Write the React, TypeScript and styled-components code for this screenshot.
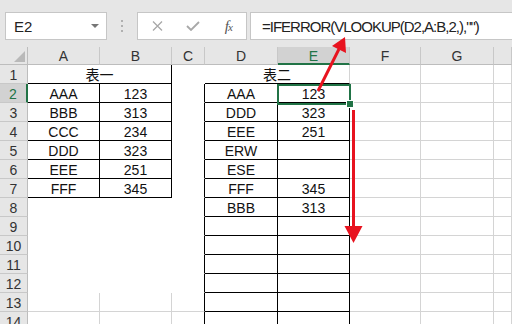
import React from 'react';
import styled, { createGlobalStyle } from 'styled-components';

const GlobalStyle = createGlobalStyle`
  body {
    margin: 0;
    background: #fff;
    font-family: 'Liberation Sans', 'Noto Sans CJK SC', sans-serif;
  }
`;

const K = '#000';
const GR = '#d4d4d4';
const NO = 'transparent';
const GREEN = '#217346';
const RED = '#e8131f';

// H only peeks in at the right edge, its letter is off screen
const COLS = ['A', 'B', 'C', 'D', 'E', 'F', 'G', ''];
const ROWS = Array.from({ length: 14 }, (_, i) => i + 1);

const TABLE_ONE = [
  ['AAA', '123'],
  ['BBB', '313'],
  ['CCC', '234'],
  ['DDD', '323'],
  ['EEE', '251'],
  ['FFF', '345'],
];

const TABLE_TWO = [
  ['AAA', '123'],
  ['DDD', '323'],
  ['EEE', '251'],
  ['ERW', ''],
  ['ESE', ''],
  ['FFF', '345'],
  ['BBB', '313'],
];

type CellSpec = { text?: string; r: string; b: string; span?: number };

const gridCell: CellSpec = { r: GR, b: GR };

const rowCells = (row: number): CellSpec[] => {
  if (row === 1) {
    return [
      { text: '表一', r: K, b: K, span: 2 },
      { r: NO, b: NO },
      { text: '表二', r: GR, b: K, span: 2 },
      gridCell,
      gridCell,
      gridCell,
    ];
  }
  const one = TABLE_ONE[row - 2];
  let left: CellSpec[];
  if (one) {
    left = [
      { text: one[0], r: K, b: K },
      { text: one[1], r: K, b: K },
    ];
  } else if (row >= 13) {
    left = [gridCell, gridCell];
  } else {
    left = [
      { r: NO, b: NO },
      { r: NO, b: NO },
    ];
  }
  const two = TABLE_TWO[row - 2] || ['', ''];
  return [
    ...left,
    { r: K, b: row >= 13 ? GR : NO },
    { text: two[0], r: K, b: K },
    { text: two[1], r: K, b: K },
    gridCell,
    gridCell,
    gridCell,
  ];
};

const Frame = styled.div`
  position: relative;
  width: 512px;
  height: 324px;
  overflow: hidden;
  background: #fff;
`;

const TopBar = styled.div`
  display: flex;
  align-items: flex-start;
  height: 50px;
  box-sizing: border-box;
  padding: 12px 0 0 5px;
  background: #e6e6e6;
  border-top: 3px solid #f2f2f2;
  margin-top: -3px;
`;

const NameBox = styled.div`
  display: flex;
  align-items: center;
  justify-content: space-between;
  width: 102px;
  height: 28px;
  box-sizing: border-box;
  padding: 0 7px 0 8px;
  background: #fff;
  border: 1px solid #c6c6c6;
  font-size: 15px;
  color: #222;
`;

const Caret = styled.span`
  width: 0;
  height: 0;
  border-left: 4px solid transparent;
  border-right: 4px solid transparent;
  border-top: 4px solid #767676;
`;

const Grip = styled.div`
  display: flex;
  flex-direction: column;
  align-items: center;
  justify-content: center;
  gap: 3px;
  width: 30px;
  height: 28px;
`;

const GripDot = styled.span`
  width: 2px;
  height: 2px;
  background: #b0b0b0;
`;

const FxBox = styled.div`
  display: flex;
  align-items: center;
  width: 110px;
  height: 28px;
  box-sizing: border-box;
  padding-left: 2px;
  background: #fff;
  border: 1px solid #c6c6c6;
`;

const IconSlot = styled.div`
  display: flex;
  align-items: center;
  justify-content: center;
  width: 36px;
  height: 100%;
`;

const FxText = styled.span`
  font-family: 'Liberation Serif', serif;
  font-style: italic;
  font-size: 15px;
  color: #555;
  letter-spacing: -1px;

  & > small {
    font-size: 11px;
  }
`;

const FormulaInput = styled.div`
  flex: 1;
  display: flex;
  align-items: center;
  height: 28px;
  box-sizing: border-box;
  margin-left: 3px;
  padding-left: 11px;
  background: #fff;
  border: 1px solid #c6c6c6;
  border-right: none;
  font-size: 15px;
  letter-spacing: -1px;
  color: #222;
  white-space: nowrap;
  overflow: hidden;
`;

const Sheet = styled.div`
  position: relative;
  display: grid;
  grid-template-columns: 28px 72px 72px 33px 73px 72px 71px 73px 1fr;
  grid-template-rows: 18px repeat(14, 19px);
`;

const Corner = styled.div`
  position: relative;
  background: #e6e6e6;
  box-sizing: border-box;
  border-right: 1px solid #bdbdbd;
  border-bottom: 1px solid #bdbdbd;

  &::after {
    content: '';
    position: absolute;
    right: 2px;
    bottom: 2px;
    width: 0;
    height: 0;
    border-left: 11px solid transparent;
    border-bottom: 11px solid #b9b9b9;
  }
`;

const ColHead = styled.div<{ $active?: boolean }>`
  display: flex;
  justify-content: center;
  box-sizing: border-box;
  padding-top: 2px;
  line-height: 14px;
  font-size: 14px;
  color: ${(p) => (p.$active ? GREEN : '#333')};
  background: ${(p) => (p.$active ? '#d2d2d2' : '#e6e6e6')};
  border-right: 1px solid #c8c8c8;
  border-bottom: ${(p) => (p.$active ? `2px solid ${GREEN}` : '1px solid #bdbdbd')};
`;

const RowHead = styled.div<{ $active?: boolean }>`
  display: flex;
  justify-content: center;
  box-sizing: border-box;
  padding-top: 2px;
  line-height: 17px;
  font-size: 14px;
  color: ${(p) => (p.$active ? GREEN : '#333')};
  background: ${(p) => (p.$active ? '#d2d2d2' : '#e6e6e6')};
  border-bottom: 1px solid #c8c8c8;
  border-right: ${(p) => (p.$active ? `2px solid ${GREEN}` : '1px solid #bdbdbd')};
`;

const Cell = styled.div<{ $r: string; $b: string; $span?: number }>`
  grid-column: span ${(p) => p.$span || 1};
  display: flex;
  justify-content: center;
  box-sizing: border-box;
  padding-top: 2px;
  line-height: 17px;
  font-size: 14px;
  color: #111;
  white-space: nowrap;
  border-right: 1px solid ${(p) => p.$r};
  border-bottom: 1px solid ${(p) => p.$b};
`;

const Selection = styled.div`
  position: absolute;
  left: 277px;
  top: 37px;
  width: 74px;
  height: 21px;
  box-sizing: border-box;
  border: 2px solid ${GREEN};
  pointer-events: none;
`;

const FillHandle = styled.span`
  position: absolute;
  right: -5px;
  bottom: -5px;
  width: 6px;
  height: 6px;
  background: ${GREEN};
  border: 1px solid #fff;
`;

const Overlay = styled.svg`
  position: absolute;
  left: 0;
  top: 0;
  pointer-events: none;
`;

const CrossIcon = () => (
  <svg width="11" height="10" viewBox="0 0 11 10">
    <path d="M1 0.5 L10 9.5 M10 0.5 L1 9.5" stroke="#a8a8a8" strokeWidth="1.3" />
  </svg>
);

const CheckIcon = () => (
  <svg width="14" height="10" viewBox="0 0 14 10">
    <path d="M1 5 L5 9 L13 1" stroke="#a8a8a8" strokeWidth="1.8" fill="none" />
  </svg>
);

export default function App() {
  return (
    <Frame>
      <GlobalStyle />
      <TopBar>
        <NameBox>
          E2
          <Caret />
        </NameBox>
        <Grip>
          <GripDot />
          <GripDot />
          <GripDot />
        </Grip>
        <FxBox>
          <IconSlot>
            <CrossIcon />
          </IconSlot>
          <IconSlot>
            <CheckIcon />
          </IconSlot>
          <IconSlot>
            <FxText>
              f<small>x</small>
            </FxText>
          </IconSlot>
        </FxBox>
        <FormulaInput>=IFERROR(VLOOKUP(D2,A:B,2,),"")</FormulaInput>
      </TopBar>

      <Sheet>
        <Corner />
        {COLS.map((c, i) => (
          <ColHead key={i} $active={c === 'E'}>
            {c}
          </ColHead>
        ))}
        {ROWS.map((row) => (
          <React.Fragment key={row}>
            <RowHead $active={row === 2}>{row}</RowHead>
            {rowCells(row).map((cell, i) => (
              <Cell key={i} $r={cell.r} $b={cell.b} $span={cell.span}>
                {cell.text}
              </Cell>
            ))}
          </React.Fragment>
        ))}
        <Selection>
          <FillHandle />
        </Selection>
      </Sheet>

      <Overlay width="512" height="324" viewBox="0 0 512 324">
        <line x1="318" y1="91" x2="339" y2="49" stroke={RED} strokeWidth="3" />
        <polygon points="345,37 346,53 332,46" fill={RED} />
        <line x1="353.5" y1="110" x2="353.5" y2="228" stroke={RED} strokeWidth="3" />
        <polygon points="344.5,226 362.5,226 353.5,243" fill={RED} />
      </Overlay>
    </Frame>
  );
}
